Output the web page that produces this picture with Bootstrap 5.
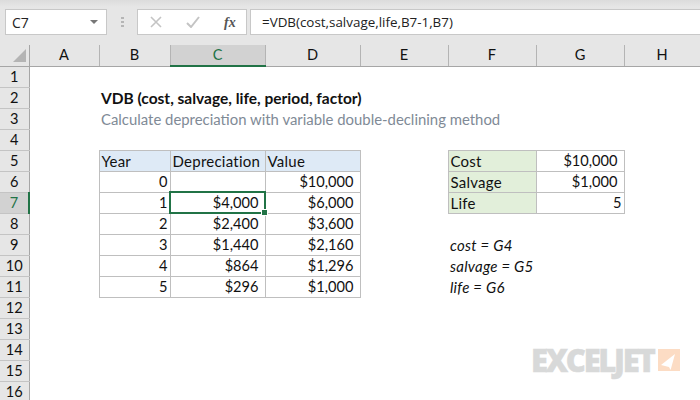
<!DOCTYPE html>
<html lang="en">
<head>
  <meta charset="UTF-8">
  <title>VDB function</title>
  <link href="https://cdn.jsdelivr.net/npm/bootstrap@5.3.0/dist/css/bootstrap.min.css" rel="stylesheet">
  <style>
    html, body { height: 400px; overflow: hidden; background: #fff; }
    .ribbon { height: 45px; padding: 9px 0 0 5px; background: linear-gradient(#dcdcdc, #e6e6e6 7px); font-family: "Open Sans", sans-serif; font-size: 13.4px; color: #222; }
    .field { height: 26px; background: #fff; border: 1px solid #c8c8c8; }
    .name-box { width: 102px; padding-left: 6px; padding-right: 8px; font-size: 14px; }
    .drop { width: 0; height: 0; border: 4px solid transparent; border-top: 4px solid #777; border-bottom: 0; margin-left: auto; }
    .grip { width: 30px; }
    .fx-box { width: 110px; margin-right: 3px; }
    .formula { flex: 1; border-right: 0; padding-left: 11px; }
    .fx-mark { font-family: "Liberation Serif", serif; font-style: italic; font-weight: 700; color: #555; font-size: 14px; margin-left: 24px; }
    .ic-x { margin-left: 12px; }
    .ic-ok { margin-left: 24px; }

    .sheet { table-layout: fixed; border-collapse: collapse; width: 700px; font-family: Lato, sans-serif; font-size: 14.6px; color: #111; }
    .sheet td, .sheet th { height: 21px; padding: 0 2px; line-height: 20px; white-space: nowrap; font-weight: 400; overflow: visible; }
    .col-head th { height: 21px; background: #e6e6e6; text-align: center; border-right: 1px solid #b4b4b4; border-bottom: 1px solid #a6a6a6; }
    .col-head th:first-child { border-right: 1px solid #a6a6a6; position: relative; }
    .corner { display: block; width: 0; height: 0; margin-left: 11px; border-style: solid; border-width: 0 0 13px 13px; border-color: transparent transparent #b4b4b4 transparent; }
    .col-head th.on { background: #d2d2d2; color: #217346; border-bottom: 2px solid #217346; }
    .row-num { background: #e6e6e6; text-align: center; padding: 0 !important; border-right: 1px solid #a6a6a6; border-bottom: 1px solid #c4c4c4; }
    .row-num.on { background: #d2d2d2; color: #217346; border-right: 2px solid #217346; }

    .boxed { border: 1px solid #bfbfbf; }
    .boxed.money { padding-right: 6px; }
    .wide-text { font-size: 15px; letter-spacing: .25px; }
    .blue-fill { background: #deeaf6; }
    .green-fill { background: #e2efda; }
    .current { position: relative; outline: 2px solid #217346; outline-offset: -1px; }
    .current::after { content: ""; position: absolute; right: -3px; bottom: -3px; width: 5px; height: 5px; background: #217346; border: 1px solid #fff; box-sizing: content-box; }
    .title-cell { font-size: 15.5px; }
    .muted-cell { color: #808a96; font-size: 14.9px; }
    .logo { position: absolute; left: 531px; top: 340px; font-family: "Open Sans", sans-serif; font-weight: 800; font-size: 31px; line-height: 40px; letter-spacing: -2.3px; color: #d8d9d9; -webkit-text-stroke: .5px #d8d9d9; }
    .logo-mark { position: absolute; left: 658px; top: 349px; }
  </style>
</head>
<body>
  <!-- toolbar -->
  <div class="ribbon d-flex align-items-start">
    <div class="field name-box d-flex align-items-center">C7<span class="drop"></span></div>
    <div class="grip d-flex justify-content-center">
      <svg width="3" height="26" viewBox="0 0 3 26"><g fill="#b5b5b5"><rect x="0" y="8" width="3" height="2"/><rect x="0" y="12" width="3" height="2"/><rect x="0" y="16" width="3" height="2"/></g></svg>
    </div>
    <div class="field fx-box d-flex align-items-center">
      <svg class="ic-x" width="12" height="12" viewBox="0 0 12 12"><path d="M1 1l10 10M11 1L1 11" stroke="#c4c4c4" stroke-width="1.6" fill="none"/></svg>
      <svg class="ic-ok" width="14" height="12" viewBox="0 0 14 12"><path d="M1 7l4 4 8-10" stroke="#c4c4c4" stroke-width="2" fill="none"/></svg>
      <span class="fx-mark">fx</span>
    </div>
    <div class="field formula d-flex align-items-center">=VDB(cost,salvage,life,B7-1,B7)</div>
  </div>

  <table class="sheet">
    <colgroup>
      <col style="width:29px"><col style="width:70px"><col style="width:71px"><col style="width:95px"><col style="width:95px">
      <col style="width:88px"><col style="width:88px"><col style="width:88px"><col style="width:76px">
    </colgroup>
    <tr class="col-head">
      <th><span class="corner"></span></th><th>A</th><th>B</th><th class="on">C</th><th>D</th><th>E</th><th>F</th><th>G</th><th>H</th>
    </tr>
    <tr><td class="row-num">1</td><td colspan="8"></td></tr>
    <tr><td class="row-num">2</td><td></td><td colspan="7" class="fw-bold title-cell">VDB (cost, salvage, life, period, factor)</td></tr>
    <tr><td class="row-num">3</td><td></td><td colspan="7" class="muted-cell">Calculate depreciation with variable double-declining method</td></tr>
    <tr><td class="row-num">4</td><td colspan="8"></td></tr>
    <tr><td class="row-num">5</td><td></td><td class="boxed blue-fill wide-text">Year</td><td class="boxed blue-fill wide-text">Depreciation</td><td class="boxed blue-fill wide-text">Value</td><td></td><td class="boxed green-fill wide-text">Cost</td><td class="boxed money text-end">$10,000</td><td></td></tr>
    <tr><td class="row-num">6</td><td></td><td class="boxed text-end">0</td><td class="boxed"></td><td class="boxed money text-end">$10,000</td><td></td><td class="boxed green-fill wide-text">Salvage</td><td class="boxed money text-end">$1,000</td><td></td></tr>
    <tr><td class="row-num on">7</td><td></td><td class="boxed text-end">1</td><td class="boxed money text-end current">$4,000</td><td class="boxed money text-end">$6,000</td><td></td><td class="boxed green-fill wide-text">Life</td><td class="boxed text-end">5</td><td></td></tr>
    <tr><td class="row-num">8</td><td></td><td class="boxed text-end">2</td><td class="boxed money text-end">$2,400</td><td class="boxed money text-end">$3,600</td><td colspan="4"></td></tr>
    <tr><td class="row-num">9</td><td></td><td class="boxed text-end">3</td><td class="boxed money text-end">$1,440</td><td class="boxed money text-end">$2,160</td><td></td><td colspan="3" class="fst-italic wide-text">cost = G4</td></tr>
    <tr><td class="row-num">10</td><td></td><td class="boxed text-end">4</td><td class="boxed money text-end">$864</td><td class="boxed money text-end">$1,296</td><td></td><td colspan="3" class="fst-italic wide-text">salvage = G5</td></tr>
    <tr><td class="row-num">11</td><td></td><td class="boxed text-end">5</td><td class="boxed money text-end">$296</td><td class="boxed money text-end">$1,000</td><td></td><td colspan="3" class="fst-italic wide-text">life = G6</td></tr>
    <tr><td class="row-num">12</td><td colspan="8"></td></tr>
    <tr><td class="row-num">13</td><td colspan="8"></td></tr>
    <tr><td class="row-num">14</td><td colspan="8"></td></tr>
    <tr><td class="row-num">15</td><td colspan="8"></td></tr>
    <tr><td class="row-num">16</td><td colspan="8"></td></tr>
  </table>

  <!-- watermark -->
  <div class="logo">EXCELJET</div>
  <svg class="logo-mark" width="22" height="22" viewBox="0 0 22 22">
    <rect width="22" height="22" fill="#fcdcc4"/>
    <path d="M17 5L3 16 11 18 12.6 21z" fill="#fff"/>
  </svg>
</body>
</html>
